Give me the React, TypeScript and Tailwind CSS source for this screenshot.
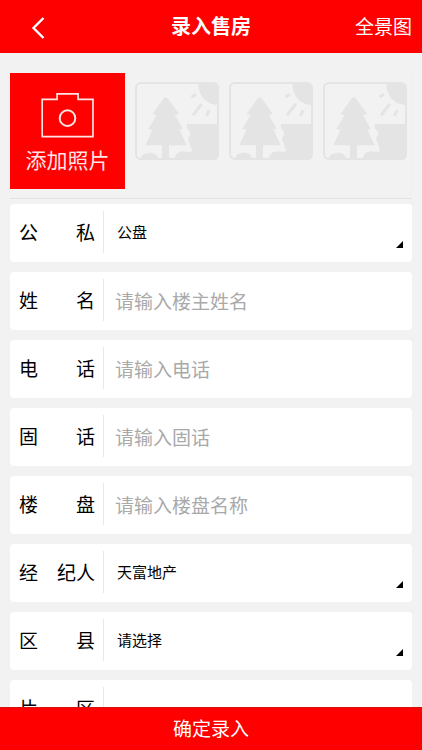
import { useState } from 'react';

interface Field {
  id: string;
  label: [string, string];
  placeholder?: string;
  options?: string[];
}

const FIELDS: Field[] = [
  { id: 'type', label: ['公', '私'], options: ['公盘', '私盘'] },
  { id: 'name', label: ['姓', '名'], placeholder: '请输入楼主姓名' },
  { id: 'mobile', label: ['电', '话'], placeholder: '请输入电话' },
  { id: 'phone', label: ['固', '话'], placeholder: '请输入固话' },
  { id: 'estate', label: ['楼', '盘'], placeholder: '请输入楼盘名称' },
  { id: 'agent', label: ['经', '纪人'], options: ['天富地产'] },
  { id: 'district', label: ['区', '县'], options: ['请选择'] },
  { id: 'area', label: ['片', '区'], options: [''] },
];

function CameraIcon() {
  return (
    <svg viewBox="120 95 164 139" className="h-[46px] w-[55px]" fill="none" stroke="#ffe5e5" strokeWidth="5" aria-hidden="true">
      <path d="M125.500 117.500H170.500V100.500H234V117.500H279V230H125.500Z" />
      <circle cx="202" cy="174" r="23.500" strokeWidth="6" />
    </svg>
  );
}

function PhotoPlaceholder() {
  return (
    <svg viewBox="15 36 252 234" className="mt-[9px] h-[78px] w-[84px] shrink-0" fill="#e4e4e4" aria-hidden="true">
      <rect x="18" y="39" width="246" height="228" rx="14" fill="none" stroke="#e4e4e4" strokeWidth="6" />
      {/* Tree */}
      <path d="M101 85Q107 78 113 85L147 132Q146 135 134 134L158 176Q157 179 148 178L170 226H117V268H96V226H46L68 178Q58 179 55 177L80 134Q70 135 68 132Z" />
      {/* Bushes and water */}
      <path d="M32 268Q36 250 52 250Q58 247 66 249Q78 250 83 262L88 268Z" />
      <path d="M170 162H262V268H133Q138 247 152 245Q160 242 168 245L184 245Q187 243 185 238L174 206Q174 202 179 199Q182 190 178 182L172 178Z" />
      <path d="M262 162V50H266V255Q266 269 252 269H200V162Z" />
      {/* Sun */}
      <path d="M205 40H252Q266 40 266 54V105Q240 105 222 87Q205 69 205 40Z" />
      <path d="M184 81L198 73M189 136L215 102M230 138L237 120" fill="none" stroke="#e4e4e4" strokeWidth="9" />
    </svg>
  );
}

function FieldRow({ field }: { field: Field }) {
  return (
    <div className="flex h-[58px] items-center rounded bg-white px-[9px] pb-[2px]">
      <label htmlFor={field.id} className="flex w-[76px] shrink-0 justify-between text-[19px] leading-7 text-black">
        <span>{field.label[0]}</span>
        <span>{field.label[1]}</span>
      </label>
      <span className="ml-2 h-[42px] w-px shrink-0 bg-[#e8e8e8]" />
      {field.options ? (
        <>
          <select
            id={field.id}
            className="ml-[13px] h-full min-w-0 flex-1 appearance-none bg-transparent text-[15px] text-black outline-none"
          >
            {field.options.map((option) => (
              <option key={option}>{option}</option>
            ))}
          </select>
          <svg viewBox="0 0 7 7" className="pointer-events-none mb-3 h-[7px] w-[7px] self-end" aria-hidden="true">
            <path d="M7 0V7H0Z" fill="#000" />
          </svg>
        </>
      ) : (
        <input
          id={field.id}
          type="text"
          placeholder={field.placeholder}
          className="ml-[11px] h-full min-w-0 flex-1 bg-transparent text-[19px] text-black outline-none placeholder:text-[#a9a9a9]"
        />
      )}
    </div>
  );
}

export default function App() {
  const [submitted, setSubmitted] = useState(false);

  return (
    <form
      className="flex h-screen flex-col bg-[#f2f2f2] font-['Noto_Sans_CJK_SC',sans-serif]"
      onSubmit={(e) => {
        e.preventDefault();
        setSubmitted(true);
      }}
    >
      <header className="grid h-[53px] shrink-0 grid-cols-3 items-center bg-[#ff0000] px-[10px] pb-[2px] text-white">
        <button type="button" aria-label="返回" className="flex h-full w-14 items-center pt-1 pl-[21px]">
          <svg viewBox="0 0 14 22" className="h-[22px] w-[14px]" fill="none" stroke="currentColor" strokeWidth="2.400" aria-hidden="true">
            <path d="M12.500 1L2.500 11L12.500 21" />
          </svg>
        </button>
        <h1 className="text-center text-[20px] leading-7 font-bold">录入售房</h1>
        <button type="button" className="justify-self-end text-[19px] leading-7">全景图</button>
      </header>

      <main className="min-h-0 flex-1 overflow-y-auto px-[10px] pt-5 [scrollbar-width:none]">
        <div className="flex gap-[10px] overflow-hidden border-r border-b border-r-[#efefef] border-b-[#e2e2e2] pb-[9px]">
          <button
            type="button"
            className="flex h-[116px] w-[115px] shrink-0 flex-col items-center bg-[#ff0000] pt-[19px] text-[21px] leading-7 text-[#ffe5e5]"
          >
            <CameraIcon />
            <span className="mt-[7px]">添加照片</span>
          </button>
          <PhotoPlaceholder />
          <PhotoPlaceholder />
          <PhotoPlaceholder />
        </div>

        <div className="mt-[5px] flex flex-col gap-[10px] pb-[10px]">
          {FIELDS.map((field) => (
            <FieldRow key={field.id} field={field} />
          ))}
        </div>
      </main>

      <button
        type="submit"
        disabled={submitted}
        className="h-[43px] shrink-0 border-t border-[#d81010] bg-[#ff0000] pb-[2px] text-[19px] leading-7 text-white"
      >
        确定录入
      </button>
    </form>
  );
}
